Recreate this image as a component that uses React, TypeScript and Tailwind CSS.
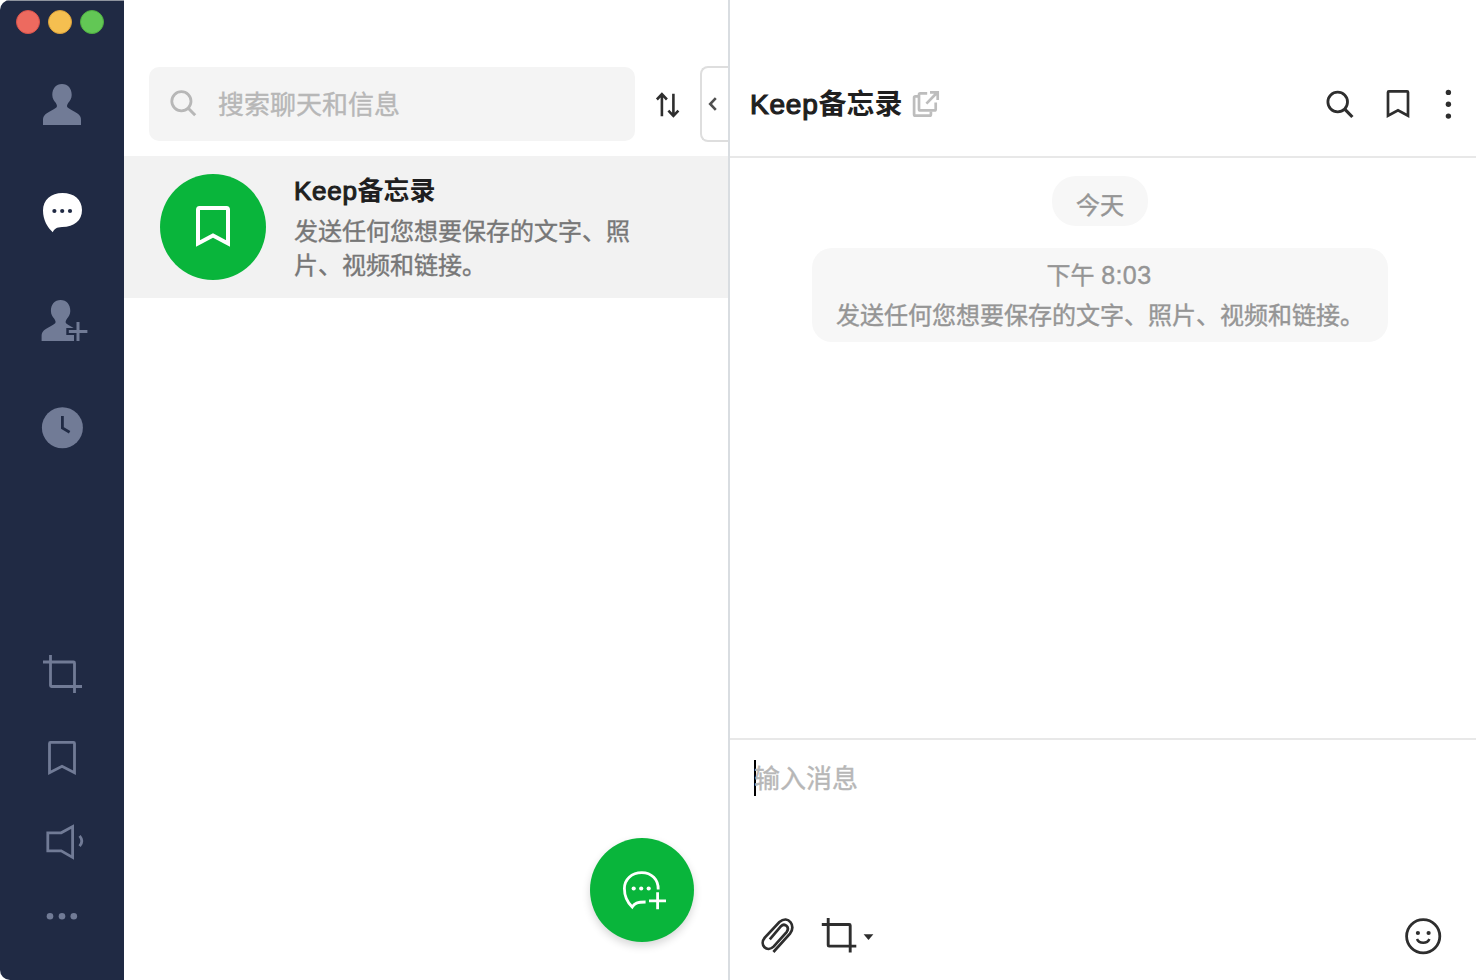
import React from "react";

type IconProps = { w?: number; h?: number; className?: string; children: React.ReactNode };

function Icon({ w = 60, h = 60, className = "", children }: IconProps) {
  return (
    <svg
      width={w}
      height={h}
      viewBox={`0 0 ${w} ${h}`}
      fill="none"
      stroke="currentColor"
      className={`block shrink-0 ${className}`}
    >
      {children}
    </svg>
  );
}

const PERSON =
  "M30 10C24 10 20.3 14.5 20.3 21C20.3 24.5 22.2 26.8 23.5 28.6C24.9 30.5 25.4 32.2 24.6 33.2C21.5 35.8 14.8 38.4 12.4 41.4C11 43.2 11 44.5 11 46.5V51H49V46.5C49 44.5 49 43.2 47.6 41.4C45.2 38.4 38.5 35.8 35.4 33.2C34.6 32.2 35.1 30.5 36.5 28.6C37.8 26.8 39.7 24.5 39.7 21C39.7 14.5 36 10 30 10Z";

function Sidebar() {
  return (
    <aside className="flex w-[124px] shrink-0 flex-col items-center border-t-[1.5px] border-[#8f949f] bg-[#202a44] text-[#717b96]">
      <div className="flex h-[43px] w-full items-center gap-2 pb-px pl-4">
        <span className="size-6 rounded-full border border-[#d9534b] bg-[#ed6a5f]" />
        <span className="size-6 rounded-full border border-[#dba13a] bg-[#f5bf50]" />
        <span className="size-6 rounded-full border border-[#4fae41] bg-[#62c755]" />
      </div>
      <nav className="mt-[30px] flex flex-col gap-12">
        <Icon>
          <path d={PERSON} fill="currentColor" stroke="none" />
        </Icon>
        <Icon className="text-white">
          <path
            d="M30.5 11C19 11 11 18 11 28.5C11 38 15.5 45.5 20.8 50.3C22.3 46.8 24.5 45.2 30 45C42.5 44.8 50 38.5 50 28C50 17.5 42 11 30.5 11Z"
            fill="currentColor"
            stroke="none"
          />
          <g fill="#202a44" stroke="none">
            <circle cx="22.4" cy="29" r="2.1" />
            <circle cx="30.2" cy="29" r="2.1" />
            <circle cx="38" cy="29" r="2.1" />
          </g>
        </Icon>
        <Icon>
          <path d={PERSON} transform="translate(-1.4 0)" fill="currentColor" stroke="none" />
          <path d="M34.3 38H42.3V30H56V52H42V45H34.3Z" fill="#202a44" stroke="none" />
          <path d="M36.8 41.5H55.4M46 32V51" strokeWidth="3" />
        </Icon>
        <Icon>
          <circle cx="30.4" cy="29.7" r="20.5" fill="currentColor" stroke="none" />
          <path d="M30.4 18V30L37.6 34.2" stroke="#202a44" strokeWidth="2.8" />
        </Icon>
      </nav>
      <div className="mt-auto mb-[54px] flex flex-col items-center">
        <Icon>
          <path d="M11 17H41.5Q42.5 17 42.5 18V48M18.5 10V40.5Q18.5 41.5 19.5 41.5H50" strokeWidth="2.8" />
        </Icon>
        <Icon className="mt-[23px]">
          <path d="M17.5 44.8V15.4Q17.5 14.4 18.5 14.4H41.5Q42.5 14.4 42.5 15.4V44.8L30 38.3Z" strokeWidth="2.8" />
        </Icon>
        <Icon className="mt-6">
          <path d="M15.8 20.8H29.2L40.6 14.6V45.4L29.2 38.8H15.8Z" strokeWidth="2.8" />
          <path d="M47.6 23.8Q52 29 47.6 34.2" strokeWidth="2.8" />
        </Icon>
        <Icon h={20} className="mt-[34px]">
          <g fill="currentColor" stroke="none">
            <circle cx="18" cy="10.2" r="3.3" />
            <circle cx="30" cy="10.2" r="3.3" />
            <circle cx="41.8" cy="10.2" r="3.3" />
          </g>
        </Icon>
      </div>
    </aside>
  );
}

function ChatList() {
  return (
    <section className="relative flex w-[606px] shrink-0 flex-col border-r-2 border-[#d9dde1]">
      <div className="flex h-[156px] items-start pt-[66px] pl-[25px]">
        <div className="mt-px flex h-[74px] w-[486px] items-center rounded-[10px] bg-[#f4f4f4] pl-5 text-[#b7b7b7]">
          <Icon w={30} h={30}>
            <circle cx="12.4" cy="12.2" r="9.6" strokeWidth="2.8" />
            <path d="M19 19L26.2 26.2" strokeWidth="3" />
          </Icon>
          <span className="ml-[19px] pt-0.5 text-[26px] leading-[36px] [-webkit-text-stroke:0.4px]">搜索聊天和信息</span>
        </div>
        <Icon w={30} h={76} className="ml-[18px] text-[#2e2e2e]">
          <path d="M8.9 50.2V28.5M3.9 33.5L8.9 28.2L13.9 33.5M20.4 27.8V49.8M15.4 44.6L20.4 49.8L25.4 44.6" strokeWidth="2.6" />
        </Icon>
        <div className="ml-auto flex h-[76px] w-7 items-center rounded-l-[8px] border-2 border-r-0 border-[#dedede] pl-1.5 text-[#505050]">
          <Icon w={12} h={16}>
            <path d="M7.8 2.2L2.2 8L7.8 13.8" strokeWidth="2.6" />
          </Icon>
        </div>
      </div>
      <div className="flex h-[142px] items-center bg-[#f2f2f2] pl-9">
        <div className="flex size-[106px] shrink-0 items-center justify-center rounded-full bg-[#09b53b] text-white">
          <Icon w={40} h={46}>
            <path d="M5 39.5V5.8Q5 4 6.5 4H33.5Q35 4 35 5.8V39.5L20 31.5Z" strokeWidth="4" />
          </Icon>
        </div>
        <div className="ml-7 w-[340px]">
          <div className="text-[26px] leading-[36px] font-bold text-[#1f1f1f]">
            <span className="font-normal tracking-[0.72px] [-webkit-text-stroke:1.1px]">Keep</span>备忘录
          </div>
          <p className="mt-1.5 -mb-px text-2xl leading-[34px] text-[#777777] [-webkit-text-stroke:0.4px]">
            发送任何您想要保存的文字、照片、视频和链接。
          </p>
        </div>
      </div>
      <button className="absolute right-[34px] bottom-[38px] flex size-[104px] items-center justify-center rounded-full bg-[#09b53b] text-white shadow-[0_4px_8px_rgba(0,0,0,0.16)]">
        <Icon w={50} h={50}>
          <path d="M41.2 24.5C41.5 14.5 34.5 7.6 24.8 7.6C14.5 7.6 7.4 14.5 7.4 23.5C7.4 31 10.5 37.5 15.2 42C17.5 38.3 20 37 28.6 37" strokeWidth="2.8" />
          <path d="M32 35.8H49M40.6 27.3V44.3" strokeWidth="2.8" />
          <g fill="currentColor" stroke="none">
            <circle cx="16.7" cy="23.5" r="2.1" />
            <circle cx="24.2" cy="23.5" r="2.1" />
            <circle cx="31.7" cy="23.5" r="2.1" />
          </g>
        </Icon>
      </button>
    </section>
  );
}

function Conversation() {
  return (
    <main className="flex min-w-0 flex-1 flex-col">
      <header className="flex h-[158px] items-start border-b-2 border-[#e8e8e8] pt-[84px] pl-5 text-[#2e2e2e]">
        <h1 className="w-[152px] pt-px text-[28px] leading-10 font-bold whitespace-nowrap text-[#1f1f1f]">
          <span className="font-normal tracking-[0.77px] [-webkit-text-stroke:1.2px]">Keep</span>备忘录
        </h1>
        <Icon w={30} h={40} className="ml-2.5 text-[#bdbdbd]">
          <path d="M6 12.4H3.3Q2.1 12.4 2.1 13.6V30.4Q2.1 31.6 3.3 31.6H17.7Q18.9 31.6 18.9 30.4V27.5" strokeWidth="2.7" />
          <path d="M15.2 9.4H8.2Q7 9.4 7 10.6V25.2Q7 26.4 8.2 26.4H22.5Q23.7 26.4 23.7 25.2V18.5" strokeWidth="2.7" />
          <path d="M14.4 19.6L25 8.8M18 8.3H25.7V16" strokeWidth="2.7" />
        </Icon>
        <Icon w={32} h={40} className="ml-auto">
          <circle cx="13.7" cy="18" r="9.8" strokeWidth="2.8" />
          <path d="M20.7 25.2L28.4 33" strokeWidth="3.2" />
        </Icon>
        <Icon w={30} h={40} className="ml-[27px]">
          <path d="M5 31.8V8.2Q5 7.3 5.9 7.3H24.1Q25 7.3 25 8.2V31.8L15 26.3Z" strokeWidth="2.7" />
        </Icon>
        <Icon w={20} h={40} className="mr-[18px] ml-[25px]">
          <g fill="currentColor" stroke="none">
            <circle cx="10.4" cy="8.4" r="2.7" />
            <circle cx="10.4" cy="20.2" r="2.7" />
            <circle cx="10.4" cy="32.1" r="2.7" />
          </g>
        </Icon>
      </header>
      <div className="flex flex-1 flex-col items-center pt-[18px] pr-[6px] text-2xl text-[#959595] [-webkit-text-stroke:0.4px]">
        <div className="h-[50px] rounded-[24px] bg-[#f7f7f7] px-6 pt-3 leading-[36px]">今天</div>
        <div className="mt-[22px] h-[94px] rounded-[20px] bg-[#f7f7f7] px-6 pt-[7px] text-center leading-10">
          <div className="pr-0.5">
            下午 <span className="text-[25px] tracking-[0.4px]">8:03</span>
          </div>
          <div className="whitespace-nowrap">发送任何您想要保存的文字、照片、视频和链接。</div>
        </div>
      </div>
      <footer className="flex h-[242px] flex-col border-t-2 border-[#e8e8e8] pt-5 text-[#2e2e2e]">
        <div className="flex h-9 items-center pl-6">
          <span className="-mr-0.5 h-9 w-0.5 bg-black" />
          <span className="pt-0.5 text-[26px] leading-9 text-[#b7b7b7] [-webkit-text-stroke:0.4px]">输入消息</span>
        </div>
        <div className="mt-auto mb-6 flex h-10 items-center pl-[30px]">
          <Icon w={36} h={40}>
            <path
              d="M13.4 36L30 17.6C36.4 10 28.6 -1.2 19.4 6L4.8 21.6C-1.2 28.8 7 37.2 13.8 30.4L26.8 15.8C30 11 24.6 6.6 21 10.2L9.8 23.4"
              strokeWidth="2.7"
            />
          </Icon>
          <Icon w={40} h={40} className="ml-6">
            <path d="M1.8 8.5H29.3Q30.2 8.5 30.2 9.4V36.4M8.2 2V29.2Q8.2 30.1 9.1 30.1H36.3" strokeWidth="2.9" />
          </Icon>
          <Icon w={12} h={8} className="ml-[3px]">
            <path d="M0.6 2.2H10.4L5.5 8Z" fill="currentColor" stroke="none" />
          </Icon>
          <Icon w={40} h={40} className="mr-[33px] ml-auto">
            <circle cx="20.2" cy="20.2" r="16.6" strokeWidth="2.8" />
            <path d="M14 23C16 28 24.4 28 26.4 23" strokeWidth="2.5" />
            <g fill="currentColor" stroke="none">
              <circle cx="14.9" cy="17" r="2.1" />
              <circle cx="25.6" cy="17" r="2.1" />
            </g>
          </Icon>
        </div>
      </footer>
    </main>
  );
}

export default function App() {
  return (
    <div className="h-[980px] w-[1476px] bg-white">
      <div className="flex h-full w-full overflow-hidden rounded-[10px] font-['Liberation_Sans','Noto_Sans_CJK_SC',sans-serif]">
        <Sidebar />
        <ChatList />
        <Conversation />
      </div>
    </div>
  );
}
